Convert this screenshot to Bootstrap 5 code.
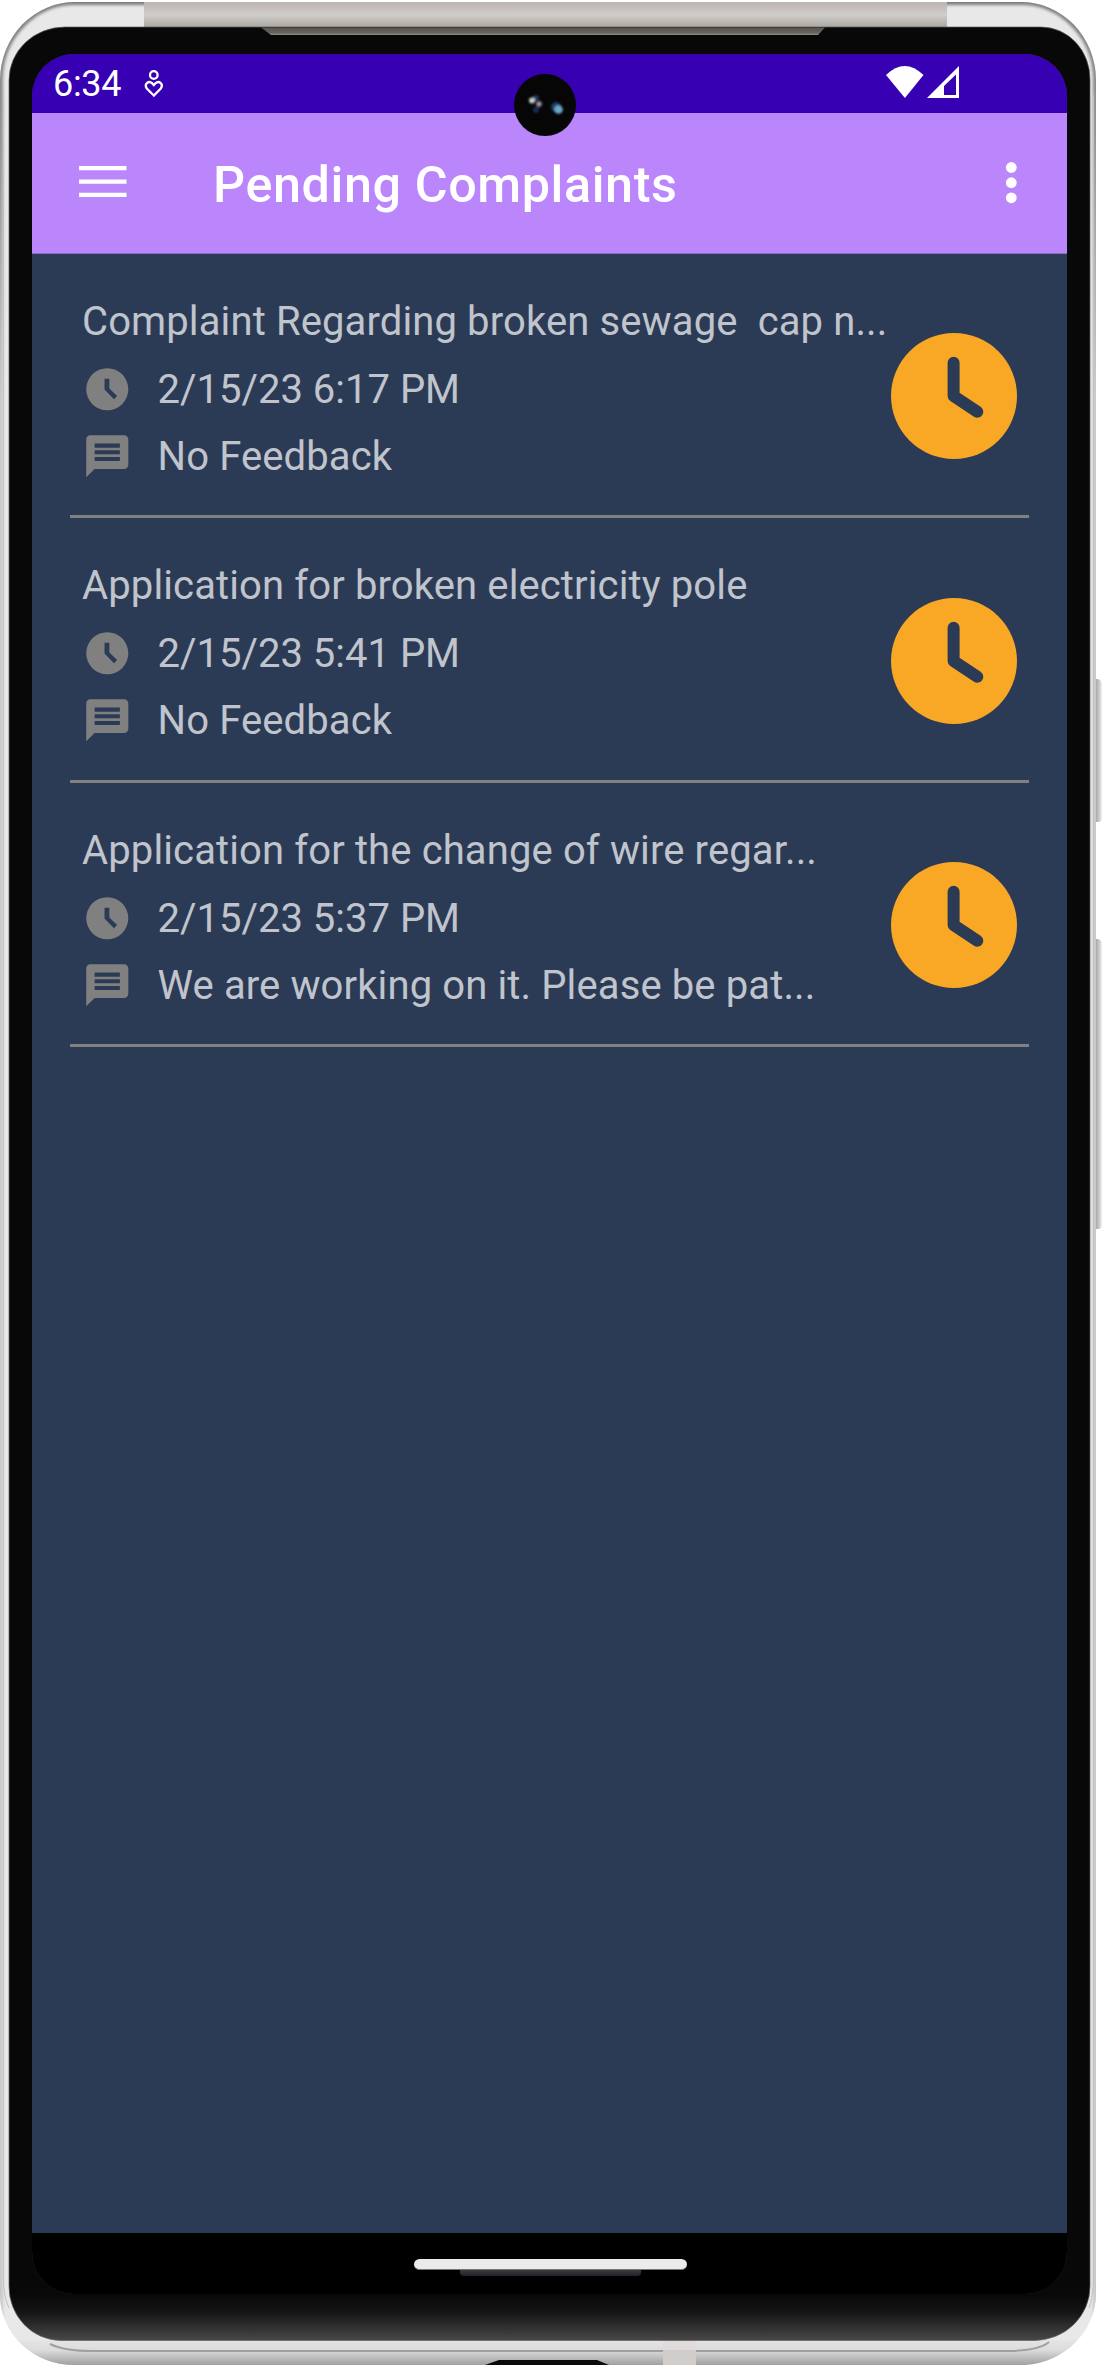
<!DOCTYPE html>
<html lang="en">
<head>
<meta charset="utf-8">
<meta name="viewport" content="width=device-width, initial-scale=1">
<title>Pending Complaints</title>
<link href="https://cdn.jsdelivr.net/npm/bootstrap@5.3.0/dist/css/bootstrap.min.css" rel="stylesheet">
<style>
  body { font-family: Roboto, "Liberation Sans", sans-serif; background: #fff; }
  .device { width: 1103px; height: 2365px; padding: 54px 36px 71px 32px; }
  .chassis { z-index: 0; }
  .screen { z-index: 1; border-radius: 42px; background: #2c3b55; }
  .status-strip { height: 59px; background: #3700b3; padding: 0 107px 0 21px; }
  .status-time { font-size: 36px; line-height: 59px; letter-spacing: -.3px; width: 91px; padding-top: 2px; }
  .app-bar { height: 141px; background: #bb86fc; padding: 0 48px 0 47px; border-bottom: 1px solid #8b6cc4; }
  .app-title { font-size: 50.3px; font-weight: 500; line-height: 1; margin-left: 86px; padding-top: 5px; letter-spacing: .6px; }
  .complaints { padding: 0 38px; margin-top: -.5px; }
  .complaint { height: 264.5px; padding: 33px 12px 0 12px; border-bottom: 3px solid #808080; color: #c0c4cc; font-size: 40px; letter-spacing: .12px; }
  .line-title { height: 69px; line-height: 69px; white-space: pre; }
  .line-meta { height: 67px; line-height: 67px; }
  .line-meta svg { margin-right: 25px; }
  .line-date { letter-spacing: 0; }
  .state-icon { margin-top: 46.5px; }
  .nav-strip { height: 61px; background: #000; padding-top: 26px; }
  .home-pill { width: 273px; height: 11px; border-radius: 5.5px; background: #ebebeb; border-bottom: 1px solid #777; margin-left: 9px; }
  .home-shade { width: 181px; height: 6px; border-radius: 0 0 4px 4px; background: linear-gradient(#3c3a42, #232228); margin-left: 10px; }
  .camera { z-index: 2; left: 514px; top: 74px; }
</style>
</head>
<body>
<div class="device position-relative overflow-hidden">
  <svg class="chassis position-absolute top-0 start-0" width="1103" height="2365" viewBox="0 0 1103 2365" aria-hidden="true">
    <defs>
      <linearGradient id="band" x1="0" y1="0" x2="0" y2="1"><stop offset="0" stop-color="#bdb5b0"/><stop offset=".5" stop-color="#cfcdcb"/><stop offset="1" stop-color="#aaa49d"/></linearGradient>
      <linearGradient id="glass" gradientUnits="userSpaceOnUse" x1="0" y1="2294" x2="0" y2="2340"><stop offset="0" stop-color="#080808"/><stop offset=".4" stop-color="#151515"/><stop offset="1" stop-color="#474747"/></linearGradient>
      <linearGradient id="foot" gradientUnits="userSpaceOnUse" x1="0" y1="2340" x2="0" y2="2365"><stop offset="0" stop-color="#e6e5e6"/><stop offset=".4" stop-color="#dcdcdc"/><stop offset="1" stop-color="#a0a0a0"/></linearGradient>
      <linearGradient id="key" x1="0" y1="0" x2="1" y2="0"><stop offset="0" stop-color="#aaa"/><stop offset=".5" stop-color="#c8c8c8"/><stop offset="1" stop-color="#f2f2f2"/></linearGradient>
      <linearGradient id="edge" gradientUnits="userSpaceOnUse" x1="0" y1="2" x2="0" y2="400"><stop offset="0" stop-color="#7e7e7e"/><stop offset=".3" stop-color="#8e8e8e"/><stop offset="1" stop-color="#c8c8c8"/></linearGradient>
      <linearGradient id="lip" x1="0" y1="0" x2="0" y2="1"><stop offset="0" stop-color="#56524c"/><stop offset=".7" stop-color="#67645e"/><stop offset="1" stop-color="#8c8e87"/></linearGradient>
      <filter id="soft" x="-5%" y="-5%" width="110%" height="110%"><feGaussianBlur stdDeviation="1.6"/></filter>
      <clipPath id="body"><path d="M75 2H1021A75 78 0 0 1 1096 80V2293A76 72 0 0 1 1025 2365H74A74 70 0 0 1 0 2295V80A75 78 0 0 1 75 2Z"/></clipPath>
    </defs>
    <path d="M1096 679h2q4 1 4 5v134q0 4-4 4h-2zM1096 939h2q4 1 4 5v281q0 4-4 4h-2z" fill="url(#key)"/>
    <g clip-path="url(#body)">
      <rect width="1103" height="2365" fill="#e8e8e8"/>
      <rect y="2340" width="1103" height="25" fill="url(#foot)"/>
      <path d="M75 2H1021A75 78 0 0 1 1096 80V2400H0V80A75 78 0 0 1 75 2Z" fill="none" stroke="url(#edge)" stroke-width="6" filter="url(#soft)"/>
      <path d="M3.5 95V2285Q5 2300 9 2308M1093.5 95V2285Q1092 2300 1089 2308" fill="none" stroke="#c2c2c2"/>
      <path d="M50 2344Q64 2351 92 2351H1011Q1040 2350 1049 2342" fill="none" stroke="#a0a0a0" stroke-width="2"/>
      <rect x="663" y="2340" width="33" height="25" fill="#d0cdca"/><rect x="663" y="2340" width="33" height="10" fill="#e0dcdc"/>
      <path d="M485 2365L499 2360H597L609 2365Z" fill="#090a09"/>
    </g>
    <rect x="144" y="2" width="803" height="26" fill="url(#band)"/>
    <path d="M65 27H1041A49 52 0 0 1 1090 80V2286A56 54 0 0 1 1034 2340.500H61A52 54 0 0 1 9 2286V80A56 53 0 0 1 65 27Z" fill="url(#glass)" stroke="#606060" stroke-width=".7"/>
    <path d="M261 27.500H825L818 35H271Z" fill="url(#lip)"/>
  </svg>

  <main class="screen position-relative h-100 d-flex flex-column overflow-hidden">
    <div class="status-strip d-flex align-items-center text-white flex-shrink-0">
      <span class="status-time">6:34</span>
      <svg width="20" height="28" viewBox="0 0 20 28" fill="none" stroke="#fff" stroke-width="2.300"><circle cx="9.800" cy="5" r="3.800"/><path d="M9.800 25.500L2.800 18.500C-.2 14 4.500 10.200 8 13.200L9.800 15L11.600 13.200C15.100 10.200 19.800 14 16.800 18.500Z"/></svg>
      <svg class="ms-auto mb-1" width="74" height="32" viewBox="0 0 74 32"><path d="M0 9Q18.700-9 37.500 9L18.900 32Z" fill="#fff"/><path d="M41 32L73 0V32ZM58 29H70V8.500L58 20Z" fill="#fff" fill-rule="evenodd"/></svg>
    </div>
    <header class="app-bar d-flex align-items-center text-white flex-shrink-0">
      <svg width="48" height="32" viewBox="0 0 48 32" fill="#fff" class="mb-1"><path d="M0 1H47.500V5.300H0zM0 14.400H47.500V18.700H0zM0 27.700H47.500V32H0z"/></svg>
      <h1 class="app-title mb-0">Pending Complaints</h1>
      <svg class="ms-auto" width="16" height="42" viewBox="0 0 16 42" fill="#fff"><circle cx="8.300" cy="5.500" r="5.400"/><circle cx="8.300" cy="20.700" r="5.400"/><circle cx="8.300" cy="35.800" r="5.400"/></svg>
    </header>

    <section class="complaints flex-grow-1">
      <svg class="d-none"><defs>
        <symbol id="i-clock" viewBox="0 0 24 24"><path fill="#808080" fill-rule="evenodd" d="M12 2a10 10 0 1 0 0 20 10 10 0 0 0 0-20zM10.700 7h2.300v4.700l3.700 3.500-1.500 1.500-4.500-4.600z"/></symbol>
        <symbol id="i-note" viewBox="0 0 24 24"><path fill="#808080" fill-rule="evenodd" d="M20 2H4a2 2 0 0 0-2 2v18l4-4h14a2 2 0 0 0 2-2V4a2 2 0 0 0-2-2zM6 5.900h12V8H6zM6 9.200h12v1.900H6zM6 12.300h12v1.900H6z"/></symbol>
        <symbol id="i-wait" viewBox="0 0 126 126"><circle cx="63" cy="63" r="63" fill="#f9a826"/><path d="M62.600 29.700V63L86.300 78.700" fill="none" stroke="#2c3b55" stroke-width="12" stroke-linecap="round" stroke-linejoin="round"/></symbol>
      </defs></svg>
      <article class="complaint d-flex justify-content-between align-items-start">
        <div>
          <div class="line-title">Complaint Regarding broken sewage  cap n...</div>
          <div class="line-meta d-flex align-items-center"><svg width="50.500" height="50.500"><use href="#i-clock"/></svg><span class="line-date">2/15/23 6:17 PM</span></div>
          <div class="line-meta d-flex align-items-center"><svg width="50.500" height="50.500"><use href="#i-note"/></svg><span>No Feedback</span></div>
        </div>
        <svg class="state-icon flex-shrink-0" width="126" height="126"><use href="#i-wait"/></svg>
      </article>
      <article class="complaint d-flex justify-content-between align-items-start">
        <div>
          <div class="line-title">Application for broken electricity pole</div>
          <div class="line-meta d-flex align-items-center"><svg width="50.500" height="50.500"><use href="#i-clock"/></svg><span class="line-date">2/15/23 5:41 PM</span></div>
          <div class="line-meta d-flex align-items-center"><svg width="50.500" height="50.500"><use href="#i-note"/></svg><span>No Feedback</span></div>
        </div>
        <svg class="state-icon flex-shrink-0" width="126" height="126"><use href="#i-wait"/></svg>
      </article>
      <article class="complaint d-flex justify-content-between align-items-start">
        <div>
          <div class="line-title">Application for the change of wire regar...</div>
          <div class="line-meta d-flex align-items-center"><svg width="50.500" height="50.500"><use href="#i-clock"/></svg><span class="line-date">2/15/23 5:37 PM</span></div>
          <div class="line-meta d-flex align-items-center"><svg width="50.500" height="50.500"><use href="#i-note"/></svg><span>We are working on it. Please be pat...</span></div>
        </div>
        <svg class="state-icon flex-shrink-0" width="126" height="126"><use href="#i-wait"/></svg>
      </article>
    </section>

    <footer class="nav-strip d-flex flex-column align-items-center flex-shrink-0">
      <div class="home-pill me-2"></div>
      <div class="home-shade me-2"></div>
    </footer>
  </main>

  <svg class="camera position-absolute" width="62" height="62" viewBox="0 0 62 62" aria-hidden="true">
    <defs><filter id="glint" x="-50%" y="-50%" width="200%" height="200%"><feGaussianBlur stdDeviation="1.300"/></filter></defs>
    <circle cx="31" cy="31" r="31" fill="#060606"/>
    <g filter="url(#glint)"><circle cx="22" cy="24" r="3" fill="#1c3560"/><circle cx="22" cy="36" r="3" fill="#152a55"/><circle cx="42" cy="33" r="5" fill="#1f3c66"/><circle cx="18" cy="26.500" r="3" fill="#c5d0cc"/><circle cx="25" cy="30" r="2.800" fill="#a18fb0"/><circle cx="44.500" cy="35.500" r="4.300" fill="#6da6cc"/></g>
  </svg>
</div>
<script src="https://cdn.jsdelivr.net/npm/bootstrap@5.3.0/dist/js/bootstrap.bundle.min.js"></script>
</body>
</html>
